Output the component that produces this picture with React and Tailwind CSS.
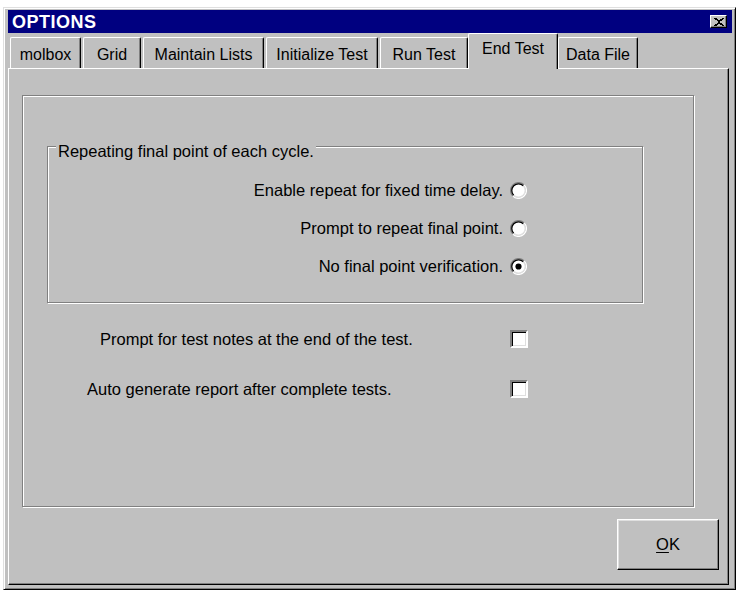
import React from 'react';

const tabs = [
  { label: 'molbox', cls: 'w-[71px]' },
  { label: 'Grid', cls: 'w-[58px]' },
  { label: 'Maintain Lists', cls: 'w-[121px]' },
  { label: 'Initialize Test', cls: 'w-[112px]' },
  { label: 'Run Test', cls: 'w-[88px]' },
  { label: 'End Test', cls: 'w-[90px]', active: true },
  { label: 'Data File', cls: 'w-[80px]' },
];

const radios = [
  { label: 'Enable repeat for fixed time delay.', checked: false },
  { label: 'Prompt to repeat final point.', checked: false },
  { label: 'No final point verification.', checked: true },
];

const Radio = ({ checked }) => (
  <svg width="17" height="17" viewBox="0 0 16 16" className="shrink-0">
    <circle cx="8" cy="8" r="6.3" fill="white" />
    <path d="M2.697 13.303A7.5 7.5 0 0 1 13.303 2.697" stroke="#808080" strokeWidth="1.2" fill="none" />
    <path d="M13.303 2.697A7.5 7.5 0 0 1 2.697 13.303" stroke="white" strokeWidth="1.2" fill="none" />
    <path d="M3.475 12.525A6.4 6.4 0 0 1 12.525 3.475" stroke="black" strokeWidth="1.2" fill="none" />
    <path d="M12.525 3.475A6.4 6.4 0 0 1 3.475 12.525" stroke="#dfdfdf" strokeWidth="1.2" fill="none" />
    {checked && <circle cx="8" cy="8" r="2.9" fill="black" />}
  </svg>
);

const Checkbox = () => (
  <div className="w-[18px] h-[18px] shrink-0 bg-white border-2 border-t-[#808080] border-l-[#808080] border-r-white border-b-white shadow-[inset_1px_1px_0_black,inset_-1px_-1px_0_#dfdfdf]" />
);

const CloseIcon = () => (
  <svg width="10" height="8" viewBox="0 0 8 7" preserveAspectRatio="none" shapeRendering="crispEdges">
    <path
      fill="black"
      d="M0 0h2v1h-2zM6 0h2v1h-2zM1 1h2v1h-2zM5 1h2v1h-2zM2 2h4v1h-4zM3 3h2v1h-2zM2 4h4v1h-4zM1 5h2v1h-2zM5 5h2v1h-2zM0 6h2v1h-2zM6 6h2v1h-2z"
    />
  </svg>
);

export default function App() {
  return (
    <div className="w-[740px] h-[593px] bg-white overflow-hidden font-['Liberation_Sans',Arial,sans-serif] text-black">
      {/* Window */}
      <div className="ml-[3px] mt-[7px] w-[733px] h-[583px] bg-[#c0c0c0] border border-t-[#dfdfdf] border-l-[#dfdfdf] border-r-black border-b-black shadow-[inset_1px_1px_0_white,inset_-1px_-1px_0_#808080] pl-[4px] pr-[3px] pt-[2px] pb-[4px] flex flex-col">
        {/* Title bar */}
        <div className="h-[23px] bg-[#000080] flex items-center justify-between pl-[4px] pr-[5px]">
          <span className="text-white font-bold text-[18px] tracking-[0.5px] leading-none">OPTIONS</span>
          <div className="w-[17px] h-[13px] bg-[#c0c0c0] border border-t-white border-l-white border-r-black border-b-black shadow-[inset_-1px_-1px_0_#808080] flex items-center justify-center">
            <CloseIcon />
          </div>
        </div>

        {/* Tabs */}
        <div className="h-[35px] flex items-end gap-[2px] pl-[2px]">
          {tabs.map((t) =>
            t.active ? (
              <div
                key={t.label}
                className={`${t.cls} h-[36px] -mx-[2px] -mb-[1px] relative z-10 bg-[#c0c0c0] border-l border-t border-white border-r border-r-black shadow-[inset_-1px_0_0_#808080] rounded-t-[2px] flex items-center justify-center pb-[5px] text-[16px]`}
              >
                {t.label}
              </div>
            ) : (
              <div
                key={t.label}
                className={`${t.cls} h-[31px] border-l border-t border-white border-r border-r-black shadow-[inset_-1px_0_0_#808080] rounded-t-[2px] flex items-center justify-center pt-[3px] text-[16px]`}
              >
                {t.label}
              </div>
            )
          )}
        </div>

        {/* Tab page */}
        <div className="w-[721px] flex-1 border border-t-white border-l-white border-r-black border-b-black shadow-[inset_-1px_-1px_0_#808080] flex flex-col">
          <div className="ml-[13px] mt-[26px] w-[672px] h-[412px] border border-[#808080] shadow-[1px_1px_0_white,inset_1px_1px_0_white] text-[16.5px]">
            {/* Group box */}
            <div className="relative ml-[24px] mt-[50px] w-[596px] h-[157px] border border-[#808080] shadow-[1px_1px_0_white,inset_1px_1px_0_white] flex flex-col items-end gap-[14px] pt-[31px] pr-[115px]">
              <span className="absolute left-[8px] -top-[5px] px-[2px] bg-[#c0c0c0] leading-[18px]">
                Repeating final point of each cycle.
              </span>
              {radios.map((r) => (
                <div key={r.label} className="h-[24px] flex items-center gap-[7px]">
                  <span>{r.label}</span>
                  <Radio checked={r.checked} />
                </div>
              ))}
            </div>

            {/* Checkboxes */}
            <div className="mt-[24px] flex flex-col gap-[26px]">
              <div className="h-[24px] flex items-center">
                <span className="ml-[77px] w-[410px]">Prompt for test notes at the end of the test.</span>
                <Checkbox />
              </div>
              <div className="h-[24px] flex items-center">
                <span className="ml-[64px] w-[423px]">Auto generate report after complete tests.</span>
                <Checkbox />
              </div>
            </div>
          </div>

          {/* OK button */}
          <div className="mt-[12px] flex justify-end pr-[9px]">
            <button className="w-[102px] h-[51px] bg-[#c0c0c0] border border-t-white border-l-white border-r-black border-b-black shadow-[inset_-1px_-1px_0_#808080,inset_1px_1px_0_#dfdfdf] text-[16.5px] flex items-center justify-center">
              <span className="underline underline-offset-[2px]">O</span>K
            </button>
          </div>
        </div>
      </div>
    </div>
  );
}
